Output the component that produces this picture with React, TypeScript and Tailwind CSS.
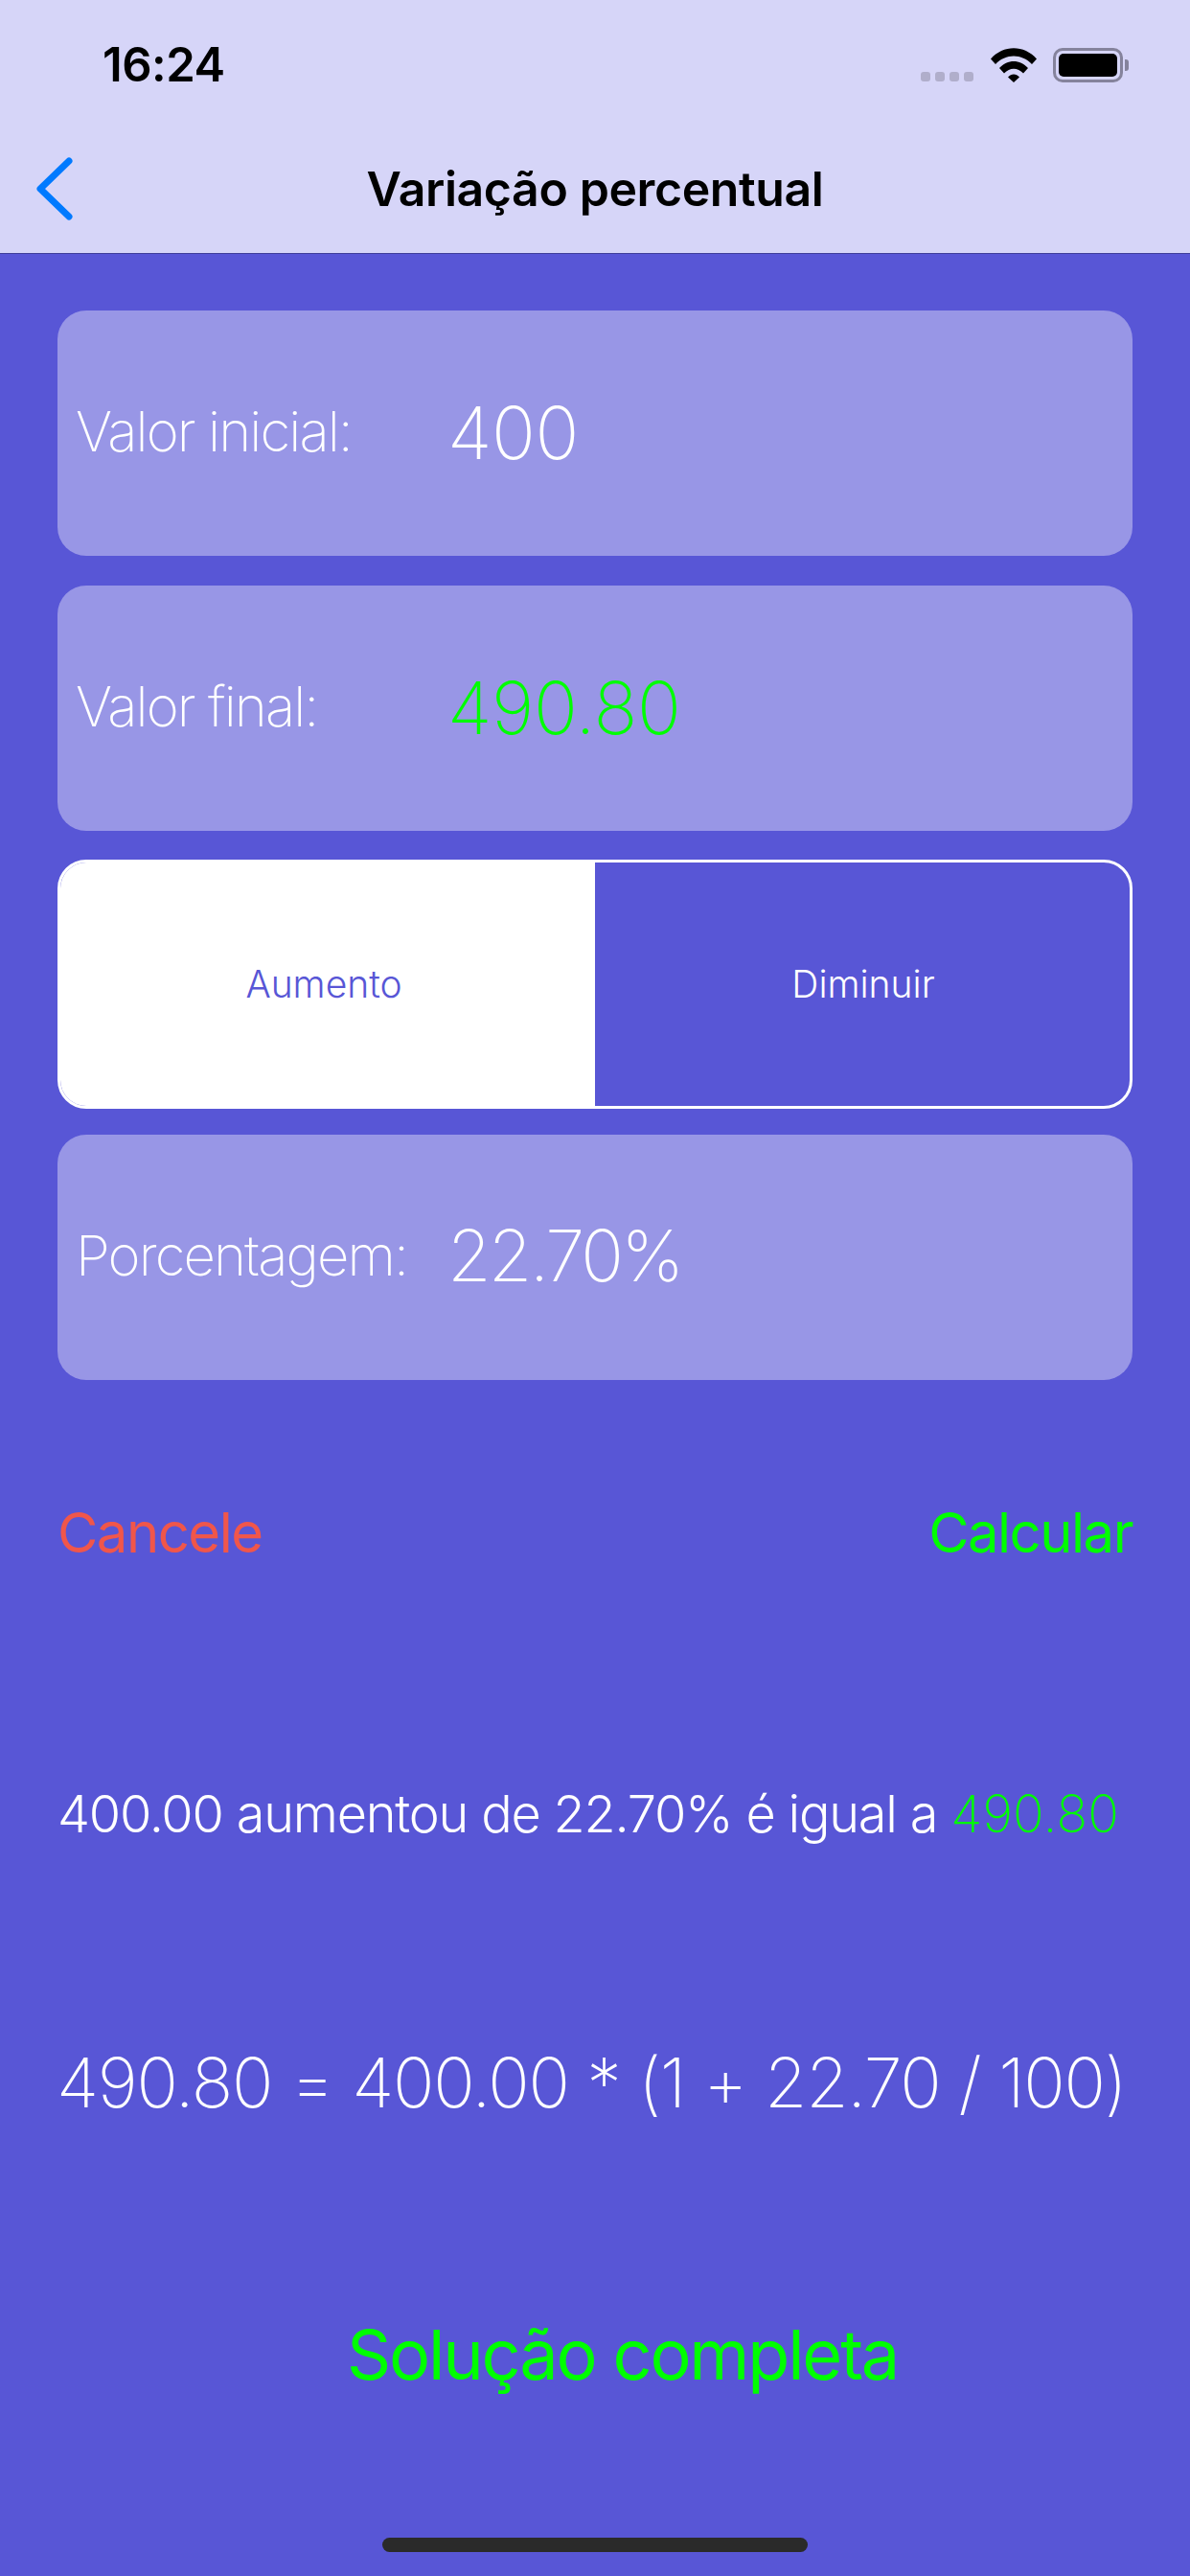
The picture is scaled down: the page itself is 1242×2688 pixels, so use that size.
const font = { fontFamily: "Inter, 'Liberation Sans', sans-serif" };

function InputCard({ label, value, valueClass }: { label: string; value: string; valueClass: string }) {
  return (
    <div className="flex h-[256px] items-center rounded-[30px] bg-[#9896E6] pb-[3px] pl-[19px]">
      <span className="w-[388px] shrink-0 text-[58px] font-[150] tracking-[-1.9px] text-white">{label}</span>
      <span className={`font-[150] ${valueClass}`}>{value}</span>
    </div>
  );
}

function StatusIcons() {
  return (
    <div className="flex items-end">
      <div className="mr-[18px] flex gap-[5px] pb-[1px]">
        {[0, 1, 2, 3].map((i) => (
          <div key={i} className="h-[10px] w-[10px] rounded-[3px] bg-[#B0AECB]" />
        ))}
      </div>
      <svg width="48" height="36" viewBox="0 0 48 36" className="mr-[17px]">
        <path d="M0 11.5 C13 -3.5 35 -3.5 48 11.5 L43 17 C32.5 5.5 15.5 5.5 5 17 Z" fill="#000" />
        <path d="M9 21 C17.5 11.5 30.5 11.5 39 21 L34 26.5 C28 20 20 20 14 26.5 Z" fill="#000" />
        <path d="M18 30.5 C21.5 26.5 26.5 26.5 30 30.5 L24 36 Z" fill="#000" />
      </svg>
      <div className="flex items-center">
        <div className="h-[36px] w-[73px] rounded-[10px] border-[3px] border-[#85839C] p-[3px]">
          <div className="h-full w-full rounded-[5px] bg-black" />
        </div>
        <div className="ml-[2px] h-[12px] w-[4px] rounded-r-[3px] bg-[#85839C]" />
      </div>
    </div>
  );
}

export default function App() {
  return (
    <div className="flex h-[2688px] w-[1242px] flex-col overflow-hidden bg-[#5856D6]" style={font}>
      <header className="h-[265px] shrink-0 border-b border-[#3F3E9A] bg-[#D6D5F8]">
        <div className="flex items-center justify-between pt-[49px] pl-[107px] pr-[64px]">
          <span className="text-[49px] leading-[38px] font-semibold tracking-[-0.5px] text-black">16:24</span>
          <StatusIcons />
        </div>
        <div className="relative mt-[75px] flex h-[70px] items-center justify-center">
          <svg width="40" height="66" viewBox="0 0 40 66" fill="none" className="absolute top-[2px] left-[37px]">
            <path d="M35 4 L5 33 L35 62" stroke="#007AFF" strokeWidth="7" strokeLinecap="round" strokeLinejoin="round" />
          </svg>
          <h1 className="text-[50px] font-semibold tracking-[-0.4px] text-black">Variação percentual</h1>
        </div>
      </header>

      <main className="flex flex-1 flex-col px-[60px] pt-[59px]">
        <InputCard label="Valor inicial:" value="400" valueClass="text-[76px] tracking-[-0.5px] text-white" />
        <div className="mt-[31px]">
          <InputCard label="Valor final:" value="490.80" valueClass="text-[76px] tracking-[-0.4px] text-[#00FF00]" />
        </div>

        <div className="mt-[30px] flex h-[260px] overflow-hidden rounded-[30px] border-[3px] border-white text-[39px] font-light">
          <div className="flex w-1/2 items-center justify-center bg-white pr-[8px] text-[#5856D6]">Aumento</div>
          <div className="flex w-1/2 items-center justify-center pl-[2px] text-white">Diminuir</div>
        </div>

        <div className="mt-[27px]">
          <InputCard label="Porcentagem:" value="22.70%" valueClass="text-[74px] tracking-[-2.8px] text-white" />
        </div>

        <div className="mt-[116px] flex items-center justify-between text-[58px] font-normal tracking-[-1.5px]">
          <span className="text-[#F0564A]">Cancele</span>
          <span className="text-[#00FF00]">Calcular</span>
        </div>

        <p className="mt-[209px] text-[54px] font-light tracking-[-1.2px] whitespace-nowrap text-white">
          400.00 aumentou de 22.70% é igual a{" "}
          <span className="font-extralight tracking-[0.2px] text-[#00FF00]">490.80</span>
        </p>

        <p className="mt-[186px] -ml-[1px] text-[72px] font-[150] tracking-[-1.3px] whitespace-nowrap text-white">
          490.80 = 400.00 * (1 + 22.70 / 100)
        </p>

        <p className="mt-[176px] pl-[302px] text-[72px] font-normal tracking-[-2.2px] whitespace-nowrap text-[#00FF00]">
          Solução completa
        </p>

        <div className="mx-auto mt-[137px] h-[15px] w-[444px] rounded-full bg-[#2A2A2A]" />
      </main>
    </div>
  );
}
